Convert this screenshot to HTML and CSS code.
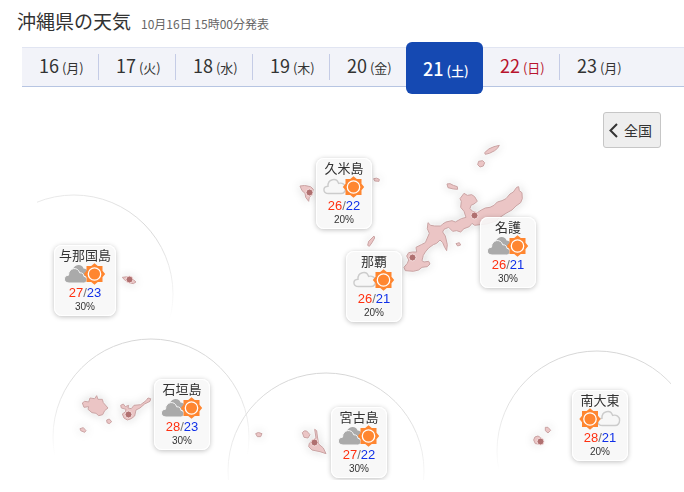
FILE: index.html
```html
<!DOCTYPE html>
<html lang="ja">

<head>
    <meta charset="utf-8" />
    <title>沖縄県の天気</title>
    <link rel="stylesheet" href="styles.css">
</head>

<body>
    <!-- weather icons -->
    <svg class="defs" width="0" height="0">
        <defs>
            <g id="sun">
                <path class="sun-fill" d="M0 -10.7L3.3 -8L8 -8L8 -3.3L10.7 0L8 3.3L8 8L3.3 8L0 10.7L-3.3 8L-8 8L-8 3.3L-10.7 0L-8 -3.3L-8 -8L-3.3 -8Z" />
                <circle class="sun-disc" r="6.2" />
            </g>
            <path id="cloud" d="M5.5 17.5C-0.5 17.5 -0.5 10.6 5 10.3C4.5 3.2 13.5 0.800 15.600 7.4C19.500 6.2 22.800 9 22.600 12.400C22.400 15.800 20.600 17.500 18 17.500Z" />
            <g id="cloudy-sunny">
                <use href="#cloud" class="cloud-line" />
                <use href="#sun" x="30.500" y="11" />
            </g>
            <g id="gray-sunny">
                <path class="cloud-gray" d="M9 6C11 0.600 18.500 0.800 19.500 5.500C23.500 5.500 25.200 10 22.500 13L17 14Z" />
                <path class="cloud-gray cloud-front" d="M5 20C-1 20 -1 12.500 4.500 12.200C4.500 4.500 14 3.200 15.700 9.800C18.500 9.500 20 11.500 19.800 13.200C24.500 14.500 23.500 20 19.500 20Z" />
                <use href="#sun" x="30.500" y="11" />
            </g>
            <g id="sunny-cloudy">
                <use href="#cloud" class="cloud-line" x="18" />
                <use href="#sun" x="11" y="11" />
            </g>
        </defs>
    </svg>

    <header class="header">
        <h1 class="title">沖縄県の天気</h1>
        <p class="announced">10月16日 15時00分発表</p>
    </header>

    <nav>
        <ul class="days">
            <li class="day"><a href="#d16"><span class="num">16</span> (月)</a></li>
            <li class="day"><a href="#d17"><span class="num">17</span> (火)</a></li>
            <li class="day"><a href="#d18"><span class="num">18</span> (水)</a></li>
            <li class="day"><a href="#d19"><span class="num">19</span> (木)</a></li>
            <li class="day"><a href="#d20"><span class="num">20</span> (金)</a></li>
            <li class="day active"><a href="#d21"><span class="num">21</span> (土)</a></li>
            <li class="day holiday"><a href="#d22"><span class="num">22</span> (日)</a></li>
            <li class="day last"><a href="#d23"><span class="num">23</span> (月)</a></li>
        </ul>
    </nav>

    <main class="map">
        <svg class="islands" width="684" height="393" viewBox="0 87 684 393">
            <defs>
                <linearGradient id="fadeA" x1="0" y1="0" x2="0.3" y2="1">
                    <stop offset="0" stop-color="#f0f0f0" />
                    <stop offset="0.4" stop-color="#d8d8d8" />
                    <stop offset="0.85" stop-color="#fff" />
                </linearGradient>
                <linearGradient id="fadeB" x1="0" y1="0" x2="0" y2="1">
                    <stop offset="0" stop-color="#d6d6d6" />
                    <stop offset="0.25" stop-color="#e0e0e0" />
                    <stop offset="0.6" stop-color="#fff" />
                </linearGradient>
                <clipPath id="clipWest"><path d="M37 180H190V370H37Z" /></clipPath>
                <clipPath id="clipEast"><path d="M480 340H671V480H480Z" /></clipPath>
            </defs>

            <!-- inset circles -->
            <g class="rings">
                <circle cx="74" cy="294" r="99" stroke="url(#fadeA)" clip-path="url(#clipWest)" />
                <circle cx="151" cy="437" r="98" stroke="url(#fadeB)" />
                <circle cx="326" cy="471" r="98" stroke="url(#fadeB)" />
                <circle cx="597" cy="451" r="100" stroke="url(#fadeB)" clip-path="url(#clipEast)" />
            </g>

            <g class="land">
                <!-- okinawa main island -->
                <g transform="translate(340 130) scale(0.3333)">
                    <path d="M372 190L382 196L395 194L404 200L412 214L402 222L393 226L390 236L398 244L412 248L424 240L436 234L450 232L462 226L472 216L486 212L498 206L510 192L520 186L530 172L536 170L538 182L546 188L547 206L542 218L528 228L516 240L498 250L480 262L466 274L440 282L420 284L404 286L396 280L388 290L372 296L362 306L350 302L338 304L326 292L312 298L308 306L316 318L322 344L320 362L314 352L308 338L300 330L290 340L280 344L266 354L256 366L250 376L246 392L252 396L266 394L270 402L262 410L246 412L236 420L220 424L196 422L192 412L202 400L206 390L200 378L206 368L218 366L230 366L228 352L244 344L256 338L262 324L268 310L262 296L264 278L272 286L284 288L302 288L308 282L318 276L336 272L346 276L364 266L378 262L372 244L362 232L364 214L360 206Z" />
                    <path d="M434 68Q446 54 462 50L478 46Q474 56 464 62Q448 72 436 73Z" />
                    <path d="M416 94L428 92L434 98L430 108L420 111L413 104Z" />
                    <path d="M321 162Q330 158 340 166L352 170L353 178L340 177L324 173Z" />
                    <path d="M101 146Q110 142 118 148L117 154L104 153Z" />
                    <path d="M102 318L104 324L96 338L88 349L83 346L86 334Z" />
                    <path d="M348 341L358 338L362 345L353 348Z" />
                </g>
                <!-- kumejima -->
                <path transform="translate(290 130) scale(0.3333)" d="M30 168Q42 164 62 170L70 178L65 196L58 202L56 214L47 202L45 190L36 182Z" />
                <!-- yonaguni -->
                <path transform="translate(20 180) scale(0.3333)" d="M307 292Q320 289 332 292L348 306L340 311Q318 308 307 292Z" />
                <!-- yaeyama -->
                <g transform="translate(50 320) scale(0.3333)">
                    <path d="M97 249L104 244L116 246L120 234L134 236L140 227L144 238L157 238L160 248L174 264L164 272L158 284L146 287L138 280L126 278L114 268L116 260L102 262Z" />
                    <path d="M212 256L220 252L226 260L236 256L234 264L244 266L252 256L272 254L288 242L294 234L302 236L300 244L284 252L270 264L258 270L254 288L244 296L232 300L222 294L217 282L226 276L228 268L214 264Z" />
                    <path d="M170 300L178 297L185 305L178 311L171 308Z" />
                    <path d="M90 326L100 323L108 332L104 337L92 332Z" />
                </g>
                <!-- miyako -->
                <g transform="translate(220 350) scale(0.3333)">
                    <path d="M284 238L290 242L292 258L296 282L310 294L318 311L300 305L276 300L266 290L268 280L276 272L288 264Z" />
                    <path d="M247 248Q252 240 260 243L270 254L264 264L252 262Z" />
                    <path d="M107 251Q114 244 126 251L122 260L112 260Z" />
                </g>
                <!-- daito -->
                <g transform="translate(480 340) scale(0.3333)">
                    <path d="M161 300Q162 288 174 288L184 294L178 312L166 311Z" />
                    <path d="M196 262L204 262L212 271L204 279L196 272Z" />
                </g>
            </g>

            <g class="cities">
                <circle cx="309.500" cy="192.500" r="3.500" />
                <circle cx="474.500" cy="215.500" r="3.500" />
                <circle cx="412.500" cy="257.500" r="3.500" />
                <circle cx="129.500" cy="279.500" r="3.500" />
                <circle cx="128.500" cy="414.500" r="3.500" />
                <circle cx="314.500" cy="442.500" r="3.500" />
                <circle cx="540.500" cy="441.500" r="3.500" />
            </g>
        </svg>

        <button type="button" class="btn-back">
            <svg width="9" height="15" viewBox="0 0 9 15"><path d="M8 1L1.500 7.500L8 14" /></svg>
            全国
        </button>

        <a href="#kumejima" class="point kumejima">
            <span class="name">久米島</span>
            <svg class="icon" width="42" height="23"><use href="#cloudy-sunny" /></svg>
            <span class="temp"><b class="high">26</b>/<b class="low">22</b></span>
            <span class="rain">20%</span>
        </a>
        <a href="#naha" class="point naha">
            <span class="name">那覇</span>
            <svg class="icon" width="42" height="23"><use href="#cloudy-sunny" /></svg>
            <span class="temp"><b class="high">26</b>/<b class="low">21</b></span>
            <span class="rain">20%</span>
        </a>
        <a href="#nago" class="point nago">
            <span class="name">名護</span>
            <svg class="icon" width="42" height="23"><use href="#gray-sunny" /></svg>
            <span class="temp"><b class="high">26</b>/<b class="low">21</b></span>
            <span class="rain">30%</span>
        </a>
        <a href="#yonaguni" class="point yonaguni">
            <span class="name">与那国島</span>
            <svg class="icon" width="42" height="23"><use href="#gray-sunny" /></svg>
            <span class="temp"><b class="high">27</b>/<b class="low">23</b></span>
            <span class="rain">30%</span>
        </a>
        <a href="#ishigaki" class="point ishigaki">
            <span class="name">石垣島</span>
            <svg class="icon" width="42" height="23"><use href="#gray-sunny" /></svg>
            <span class="temp"><b class="high">28</b>/<b class="low">23</b></span>
            <span class="rain">30%</span>
        </a>
        <a href="#miyako" class="point miyako">
            <span class="name">宮古島</span>
            <svg class="icon" width="42" height="23"><use href="#gray-sunny" /></svg>
            <span class="temp"><b class="high">27</b>/<b class="low">22</b></span>
            <span class="rain">30%</span>
        </a>
        <a href="#minamidaito" class="point minamidaito">
            <span class="name">南大東</span>
            <svg class="icon" width="42" height="23"><use href="#sunny-cloudy" /></svg>
            <span class="temp"><b class="high">28</b>/<b class="low">21</b></span>
            <span class="rain">20%</span>
        </a>
    </main>
</body>

</html>
```
FILE: styles.css
```css
body {
    margin: 0;
    overflow: hidden;
    background: #fff;
    color: #333;
    font-family: "Noto Sans CJK JP", sans-serif;
}

a {
    color: inherit;
    text-decoration: none;
}

.defs {
    position: absolute;
}

.header {
    display: flex;
    align-items: baseline;
    gap: 10px;
    height: 39px;
    padding: 8px 17px 0;
}

.title {
    margin: 0;
    font-size: 19px;
    font-weight: 400;
    line-height: 26px;
}

.announced {
    margin: 0;
    color: #666;
    font-size: 12px;
}

.days {
    display: flex;
    box-sizing: border-box;
    height: 40px;
    margin: 0 0 0 22px;
    padding: 0;
    list-style: none;
    background: #f2f3f9;
    border-top: 1px solid #e1e5f2;
    border-bottom: 1px solid #b7c5e2;
}

.day {
    box-sizing: border-box;
    width: 77px;
    margin: 6px 0;
    padding-left: 17px;
    border-right: 1px solid #c5cce6;
    font-size: 13px;
    line-height: 22px;
    white-space: nowrap;
}

.day .num {
    font-size: 18px;
}

.day.active {
    margin: -6px 0 -8px -1px;
    padding-top: 15px;
    border: 0;
    border-radius: 6px;
    background: #1549b2;
    color: #fff;
    font-weight: 500;
}

.day.holiday {
    color: #b8142d;
}

.day.last {
    border-right: 0;
}

.map {
    position: relative;
    display: flex;
    align-items: flex-start;
    justify-content: flex-end;
    min-height: 368px;
    padding: 25px 23px 0;
}

.islands {
    position: absolute;
    top: 0;
    left: 0;
}

.rings {
    fill: none;
}

.land {
    fill: #ebc5c5;
    stroke: #c9a3a3;
    stroke-width: 3;
    stroke-linejoin: round;
    filter: drop-shadow(0 0 1px #fff) drop-shadow(0 0 4px rgba(0, 0, 0, 0.15));
}

.cities {
    fill: #b07070;
    stroke: #f3dcdc;
    stroke-width: 1;
}

.btn-back {
    position: relative;
    display: flex;
    align-items: center;
    gap: 6px;
    height: 36px;
    padding: 0 8px 0 5px;
    border: 1px solid #c6c6c6;
    border-radius: 3px;
    background: #eee;
    color: #333;
    font-family: inherit;
    font-size: 14px;
}

.btn-back path {
    fill: none;
    stroke: #333;
    stroke-width: 2;
}

/* forecast boxes on the map */
.point {
    position: absolute;
    display: flex;
    flex-direction: column;
    align-items: center;
    box-sizing: border-box;
    min-width: 56px;
    padding: 1px 5px 3px;
    border-radius: 8px;
    background: rgba(247, 247, 247, 0.9);
    box-shadow: 0 1px 5px rgba(0, 0, 0, 0.25), inset 0 0 0 1px #fff;
}

.name {
    font-size: 13px;
    line-height: 17px;
}

.temp,
.rain {
    font-family: "Liberation Sans", sans-serif;
}

.temp {
    color: #777;
    font-size: 13px;
    line-height: 14px;
}

.temp b {
    font-weight: 400;
}

.temp .high {
    color: #ff3010;
}

.temp .low {
    color: #1030e8;
}

.rain {
    font-size: 10px;
    line-height: 13px;
}

.sun-fill {
    fill: #ff8630;
}

.sun-disc {
    fill: #ff8630;
    stroke: #fff;
    stroke-width: 1.3;
}

.cloud-line {
    fill: #f7f7f7;
    stroke: #ccc;
    stroke-width: 1.4;
}

.cloud-gray {
    fill: #aaa;
}

.cloud-front {
    stroke: #f7f7f7;
    stroke-width: 1;
}

.kumejima {
    left: 316px;
    top: 71px;
}

.naha {
    left: 346px;
    top: 164px;
}

.nago {
    left: 480px;
    top: 130px;
}

.yonaguni {
    left: 54px;
    top: 158px;
}

.ishigaki {
    left: 154px;
    top: 292px;
}

.miyako {
    left: 331px;
    top: 320px;
}

.minamidaito {
    left: 572px;
    top: 303px;
}
```
